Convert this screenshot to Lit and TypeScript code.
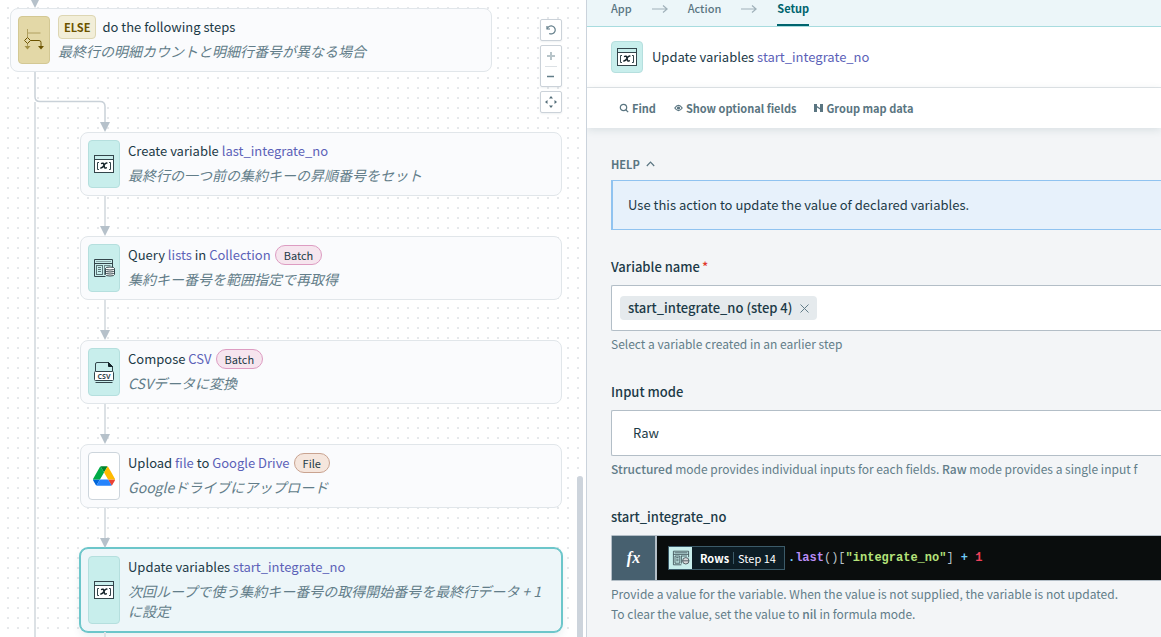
import { LitElement, html, svg, css, nothing, type TemplateResult } from "lit";
import { customElement, property } from "lit/decorators.js";

const variableIcon = html`<svg width="22" height="20" viewBox="0 0 22 20" aria-hidden="true">
  <rect x="1.5" y="1.5" width="19" height="17" fill="#fff" stroke="#33454b" />
  <rect x="2" y="2" width="18" height="3" fill="#c8eeec" />
  <path d="M1.500 5.500h19" stroke="#33454b" />
  <path d="M6 8.500H4.500v7H6M16 8.500h1.500v7H16" fill="none" stroke="#33454b" />
  <path d="M8.600 9.400q1.800-.7 2.200 1l.6 2.800q.4 1.300 1.900.7M13.800 9.100q-1.400-.3-2.700 2.100t-3.200 2.800" fill="none" stroke="#16242a" stroke-width="1.500" stroke-linecap="round" />
</svg>`;

const listIcon = html`<svg width="22" height="20" viewBox="0 0 22 20" fill="none" stroke="#33454b" aria-hidden="true">
  <path d="M19.500 9V1.500h-18v17h11" />
  <path d="M1.500 5.500h18" />
  <path d="M3 3.500h15" stroke="#8aa5a7" />
  <rect x="3.500" y="7.500" width="6" height="9" stroke="#5a7376" />
  <path d="M5 9.500h3M5 11.500h3M5 13.500h3" stroke="#5a7376" />
  <path d="M11.500 7.500h6M11.500 7v10" stroke="#6f8a8d" />
  <path d="M12.500 10.500v6q0 1.500 4.500 1.500t4.500-1.500v-6" fill="#fff" />
  <ellipse cx="17" cy="10.500" rx="4.500" ry="1.500" fill="#fff" />
  <path d="M12.500 12.500q0 1.500 4.500 1.500t4.500-1.500M12.500 14.500q0 1.500 4.500 1.500t4.500-1.500" />
</svg>`;

const csvIcon = html`<svg width="22" height="24" viewBox="0 0 22 24" aria-hidden="true">
  <path d="M2.500 11V4q0-1.500 1.500-1.500h11.500l4 4V11" fill="none" stroke="#33454b" />
  <path d="M15.500 2.500v4h4z" fill="#16242a" stroke="#16242a" />
  <rect x="1.500" y="11.500" width="19" height="9" rx="1" fill="#fff" stroke="#33454b" />
  <path d="M2.500 22.500h17" stroke="#33454b" />
  <text x="11" y="18.500" text-anchor="middle" font-family="Open Sans, sans-serif" font-size="7" font-weight="700" fill="#33454b">CSV</text>
</svg>`;

const driveIcon = html`<svg width="22" height="20" viewBox="0 0 87 78" aria-hidden="true">
  <path fill="#0066da" d="m6.600 66.850 3.850 6.650c.8 1.400 1.950 2.500 3.300 3.300l13.750-23.800h-27.500c0 1.550.4 3.100 1.200 4.500z" />
  <path fill="#00ac47" d="m43.650 25-13.750-23.800c-1.350.8-2.500 1.900-3.300 3.300l-25.400 44a9.060 9.060 0 0 0 -1.200 4.500h27.500z" />
  <path fill="#ea4335" d="m73.550 76.800c1.350-.8 2.500-1.900 3.300-3.300l1.600-2.750 7.650-13.250c.8-1.400 1.200-2.950 1.200-4.500h-27.502l5.852 11.500z" />
  <path fill="#00832d" d="m43.650 25 13.750-23.800c-1.350-.8-2.900-1.200-4.500-1.200h-18.500c-1.600 0-3.150.45-4.500 1.200z" />
  <path fill="#2684fc" d="m59.800 53h-32.300l-13.750 23.800c1.350.8 2.900 1.200 4.500 1.200h50.800c1.600 0 3.150-.45 4.500-1.200z" />
  <path fill="#ffba00" d="m73.400 26.500-12.700-22c-.8-1.400-1.950-2.500-3.300-3.300l-13.750 23.800 16.150 28h27.450c0-1.550-.4-3.100-1.200-4.500z" />
</svg>`;

const elseIcon = html`<svg width="22" height="22" viewBox="0 0 22 22" fill="none" aria-hidden="true">
  <path d="M4.500 0v8M4.500 14v4M5 4h12.500" stroke="#b0a061" />
  <path d="m1.500 17 3 3.500 3-3.500z" fill="#a39146" />
  <path d="m4.500 8.500 3 3-3 3-3-3z" stroke="#6b5300" />
  <path d="M7.500 11.500H16q2 0 2 2V18" stroke="#6b5300" />
  <path d="m15 17 3 3.500 3-3.500z" fill="#6b5300" />
</svg>`;

const icons: Record<string, TemplateResult> = {
  variable: variableIcon,
  list: listIcon,
  csv: csvIcon,
  drive: driveIcon,
  branch: elseIcon,
};

type Part = { text: string; accent?: boolean };

interface Step {
  icon: string;
  title: Part[];
  note: string;
  tag?: string;
  tagKind?: "batch" | "file";
  selected?: boolean;
}

const steps: Step[] = [
  {
    icon: "variable",
    title: [{ text: "Create variable " }, { text: "last_integrate_no", accent: true }],
    note: "最終行の一つ前の集約キーの昇順番号をセット",
  },
  {
    icon: "list",
    title: [{ text: "Query " }, { text: "lists", accent: true }, { text: " in " }, { text: "Collection", accent: true }],
    note: "集約キー番号を範囲指定で再取得",
    tag: "Batch",
    tagKind: "batch",
  },
  {
    icon: "csv",
    title: [{ text: "Compose " }, { text: "CSV", accent: true }],
    note: "CSVデータに変換",
    tag: "Batch",
    tagKind: "batch",
  },
  {
    icon: "drive",
    title: [{ text: "Upload " }, { text: "file", accent: true }, { text: " to " }, { text: "Google Drive", accent: true }],
    note: "Googleドライブにアップロード",
    tag: "File",
    tagKind: "file",
  },
  {
    icon: "variable",
    title: [{ text: "Update variables " }, { text: "start_integrate_no", accent: true }],
    note: "次回ループで使う集約キー番号の取得開始番号を最終行データ + 1 に設定",
    selected: true,
  },
];

@customElement("recipe-step")
class RecipeStep extends LitElement {
  @property({ attribute: false }) step!: Step;
  @property() keyword = "";

  static styles = css`
    :host { display: block; }
    .card {
      display: flex;
      gap: 8px;
      padding: 7px;
      border: 1px solid #e1e6ea;
      border-radius: 8px;
      background: #fafbfd;
    }
    .card.selected {
      border-color: #6cc6ca;
      background: #edf6f9;
      box-shadow: 0 0 0 1px #6cc6ca, 0 4px 8px rgba(30, 70, 90, 0.1);
    }
    .icon {
      flex: none;
      display: flex;
      align-items: center;
      justify-content: center;
      box-sizing: border-box;
      width: 32px;
      min-height: 48px;
      border: 1px solid #b5dfde;
      border-radius: 4px;
      background: #c8eeec;
    }
    .icon.drive { border-color: #cdd5dc; background: #fff; }
    .icon.branch { border-color: #d3c894; background: #e3d8a7; }
    .body { min-width: 0; }
    .title { display: flex; align-items: center; height: 22px; font-size: 13px; line-height: 22px; color: #1c3a47; white-space: pre; }
    .accent { color: #5c62b8; }
    .note { margin: 3px 0; line-height: 20px; font-style: italic; color: #627d89; }
    .tag {
      box-sizing: border-box;
      height: 20px;
      margin-left: 4px;
      padding: 0 8px;
      border: 1px solid;
      border-radius: 10px;
      font-size: 11px;
      line-height: 18px;
    }
    .batch { border-color: #dd9cc2; background: #f6e5ee; }
    .file { border-color: #c9a390; background: #f5e6dd; }
    .keyword {
      box-sizing: border-box;
      height: 24px;
      margin-right: 6px;
      padding: 0 5px;
      border: 1px solid #ddd6b3;
      border-radius: 4px;
      background: #f2eed8;
      color: #6b5300;
      font-size: 11px;
      font-weight: 700;
      line-height: 22px;
    }
  `;

  render() {
    const s = this.step;
    return html`<article class="card ${s.selected ? "selected" : ""}">
      <div class="icon ${s.icon}">${icons[s.icon]}</div>
      <div class="body">
        <div class="title">${this.keyword ? html`<span class="keyword">${this.keyword}</span>` : nothing}${s.title.map(
          (p) => html`<span class=${p.accent ? "accent" : ""}>${p.text}</span>`
        )}${s.tag ? html`<span class="tag ${s.tagKind}">${s.tag}</span>` : nothing}</div>
        <p class="note">${s.note}</p>
      </div>
    </article>`;
  }
}

@customElement("recipe-canvas")
class RecipeCanvas extends LitElement {
  static styles = css`
    :host {
      display: block;
      position: relative;
      overflow: hidden;
      background: #fff radial-gradient(circle at 8px 8px, #e6e8eb 1px, transparent 1px) 0 0 / 10px 10px;
    }
    .flow { padding: 0 24px 0 10px; }
    .connector { display: block; }
    .root { margin-right: 70px; }
    .branch { display: flex; }
    .trunk { flex: none; width: 2px; margin: 0 44px 0 24px; background: #dce1e5; }
    .steps { flex: 1; min-width: 0; }
    .controls { position: absolute; top: 19px; right: 24px; display: flex; flex-direction: column; gap: 4px; }
    .group {
      box-sizing: border-box;
      width: 22px;
      border: 1px solid #cbd2d9;
      border-radius: 2px;
      background: #fff;
      box-shadow: 0 1px 2px rgba(30, 60, 80, 0.08);
    }
    .control { display: flex; align-items: center; justify-content: center; width: 20px; height: 20px; padding: 0; border: 0; background: none; }
    .control:disabled { opacity: 0.45; }
    .rule { width: 12px; height: 0; margin: 0 auto -1px; border: 0; border-top: 1px solid #dce1e5; }
    .scrollbar { position: absolute; top: 476px; right: 3px; bottom: 0; width: 6px; border-radius: 3px 3px 0 0; background: #cdd4dc; }
  `;

  private link(height: number, x: number) {
    return html`<svg class="connector" width=${x + 10} height=${height} aria-hidden="true">
      <rect x=${x - 1} width="2" height=${height - 4} fill="#dce1e5" />
      <path transform="translate(${x} ${height})" d="M-5-10H5L0 0z" fill="#b6c1ca" />
    </svg>`;
  }

  render() {
    return html`
      <div class="flow">
        ${this.link(8, 25)}
        <recipe-step
          class="root"
          keyword="ELSE"
          .step=${{ icon: "branch", title: [{ text: "do the following steps" }], note: "最終行の明細カウントと明細行番号が異なる場合" }}
        ></recipe-step>
        <svg class="connector" width="110" height="60" aria-hidden="true">
          <path d="M25 0v25q0 4.500 5 4.500h60q5 0 5 5V50" fill="none" stroke="#c9d1d8" stroke-width="1.500" />
          <rect x="24" y="30" width="2" height="30" fill="#dce1e5" />
          <path d="M90 50h10l-5 10z" fill="#b6c1ca" />
        </svg>
        <div class="branch">
          <div class="trunk"></div>
          <div class="steps">
            ${steps.map((s, i) => html`${i ? this.link(40, 25) : nothing}<recipe-step .step=${s}></recipe-step>`)}
            ${this.link(40, 25)}
          </div>
        </div>
      </div>
      <div class="controls">
        <div class="group">
          <button class="control" aria-label="Undo">
            <svg width="10" height="10" viewBox="0 0 10 10" fill="none" stroke="#627d89" stroke-width="1.200">
              <path d="M1 1v3h3" />
              <path d="M1.400 3.600A4 4 0 1 1 3.200 8.400" />
            </svg>
          </button>
        </div>
        <div class="group">
          <button class="control" aria-label="Zoom in" disabled>
            <svg width="8" height="8"><path d="M4 0v8M0 4h8" stroke="#627d89" stroke-width="2" /></svg>
          </button>
          <hr class="rule" />
          <button class="control" aria-label="Zoom out">
            <svg width="8" height="8"><path d="M0 4.500h7" stroke="#627d89" stroke-width="1.500" /></svg>
          </button>
        </div>
        <div class="group">
          <button class="control" aria-label="Fit to screen">
            <svg width="12" height="12" viewBox="0 0 12 12" fill="#526c78">
              <path d="M6 0l2 2.500H4zM6 12l2-2.500H4zM0 6l2.500-2v4zM12 6 9.500 4v4z" />
            </svg>
          </button>
        </div>
      </div>
      <div class="scrollbar"></div>
    `;
  }
}

@customElement("setup-panel")
class SetupPanel extends LitElement {
  static styles = css`
    :host {
      display: block;
      box-sizing: border-box;
      overflow: hidden;
      border-left: 1px solid #cbd3dc;
      background: #f3f5f7;
      color: #1c3a47;
      font-size: 13px;
    }
    button, select { font: inherit; color: inherit; }
    button { padding: 0; border: 0; background: none; }
    .tabs { display: flex; align-items: center; gap: 20px; height: 26px; padding-left: 24px; border-bottom: 1px solid #a8dcdf; background: #ecf6f9; font-size: 11px; font-weight: 500; }
    .tab { height: 26px; padding-bottom: 8px; border-bottom: 2px solid transparent; box-sizing: border-box; line-height: 16px; color: #5a7581; text-decoration: none; }
    .tab.active { border-color: #00646e; color: #00646e; font-weight: 700; }
    .next { display: block; margin-bottom: 8px; }
    .header { display: flex; align-items: center; gap: 9px; padding: 14px 24px; border-bottom: 1px solid #e1e5e8; background: #fff; }
    .icon { display: flex; align-items: center; justify-content: center; box-sizing: border-box; width: 32px; height: 32px; border: 1px solid #b5dfde; border-radius: 4px; background: #c8eeec; }
    .heading { margin: 0; font-size: 13px; font-weight: 400; line-height: 20px; }
    .accent { color: #5c62b8; }
    .toolbar { position: relative; display: flex; gap: 18px; height: 40px; padding-left: 32px; background: #fff; box-shadow: 0 2px 8px rgba(30, 70, 80, 0.12); font-size: 11px; color: #5a7581; }
    .tool { display: flex; align-items: center; gap: 3px; font-weight: 700; }
    .content { padding: 26px 0 0 24px; }
    .help-toggle { display: flex; align-items: center; gap: 6px; font-size: 11px; font-weight: 700; line-height: 20px; color: #5a7581; }
    .help { margin: 6px 0 27px; padding: 14px 15px; border: solid #90c3f0; border-width: 1px 0 1px 2px; background: #e7f1fb; line-height: 20px; }
    .field { margin-bottom: 28px; }
    .label { display: block; margin-bottom: 8px; font-weight: 500; line-height: 20px; }
    .required { margin-left: 2px; color: #e0392b; }
    .box { display: flex; align-items: center; box-sizing: border-box; width: 100%; height: 46px; border: solid #b3bec7; border-width: 1px 0 1px 1px; border-radius: 2px 0 0 2px; background: #fff; }
    .tokens { padding: 0 8px; }
    .token { display: flex; align-items: center; gap: 8px; height: 24px; padding: 0 8px; border-radius: 4px; background: #e5eaed; font-weight: 500; line-height: 24px; }
    .remove { display: flex; }
    .select { appearance: none; padding: 0 21px; }
    .hint { margin: 3px 0 0; font-size: 12px; line-height: 20px; color: #627d89; white-space: nowrap; }
    .strong { font-weight: 500; }
    .editor { background: #0a0d0d; }
    .fx { align-self: stretch; width: 45px; border-right: 2px solid #b3bec7; background: #47606f; color: #fff; font: italic 700 16px "Liberation Serif", serif; }
    .pill { display: flex; align-items: center; height: 22px; margin-left: 11px; border: 1px solid #3c5b69; background: #0d1d25; color: #fff; font-size: 11px; }
    .pill-icon { display: flex; align-items: center; justify-content: center; width: 23px; height: 22px; background: #c8eeec; }
    .pill-name { padding: 0 4px 0 8px; font-weight: 700; }
    .pill-step { padding: 0 8px 0 4px; border-left: 1px solid #3c5b69; line-height: 12px; }
    .code { margin-left: 3px; font: 700 12px/16px "Liberation Mono", monospace; color: #b9c3c9; white-space: pre; }
    .op { color: #6fcbf5; }
    .fn { color: #b98cf5; }
    .str { color: #b5e27a; }
    .num { color: #f0405a; }
    .plain { font-weight: 400; }
  `;

  render() {
    const arrow = html`<svg class="next" width="16" height="8" viewBox="0 0 16 8" fill="none" stroke="#9fb0b9" stroke-width="1.200" aria-hidden="true"><path d="M0 4h15M11 .5 15.200 4 11 7.500" /></svg>`;
    return html`
      <nav class="tabs">
        <a class="tab" href="#app">App</a>${arrow}<a class="tab" href="#action">Action</a>${arrow}<a class="tab active" href="#setup">Setup</a>
      </nav>
      <header class="header">
        <div class="icon">${variableIcon}</div>
        <h1 class="heading">Update variables <span class="accent">start_integrate_no</span></h1>
      </header>
      <div class="toolbar">
        <button class="tool">
          <svg width="10" height="10" viewBox="0 0 10 10" fill="none" stroke="#5a7581" stroke-width="1.200"><circle cx="4.500" cy="4.500" r="3.200" /><path d="m7 7 2.200 2.200" /></svg>
          Find
        </button>
        <button class="tool">
          <svg width="9" height="8" viewBox="0 0 9 8" fill="none" stroke="#5a7581" stroke-width="1.200"><path d="M.8 4Q4.500-1.200 8.200 4 4.500 9.200.8 4z" /><circle cx="4.500" cy="4" r="1" fill="#5a7581" /></svg>
          Show optional fields
        </button>
        <button class="tool">
          <svg width="9" height="8" viewBox="0 0 9 8" fill="#5a7581"><path d="M0 0h3v8H0zM6 0h3v8H6z" /><path d="m3 2 3 2v1.500L3 3.500z" /></svg>
          Group map data
        </button>
      </div>
      <div class="content">
        <button class="help-toggle" aria-expanded="true">
          HELP
          <svg width="9" height="6" viewBox="0 0 9 6" fill="none" stroke="#5a7581" stroke-width="1.200"><path d="m.8 5 3.700-3.800L8.200 5" /></svg>
        </button>
        <div class="help">Use this action to update the value of declared variables.</div>

        <div class="field" role="group" aria-labelledby="variable-label">
          <span class="label" id="variable-label">Variable name<span class="required">*</span></span>
          <div class="box tokens">
            <span class="token">start_integrate_no (step 4)
              <button class="remove" aria-label="Remove">
                <svg width="9" height="9" viewBox="0 0 9 9" stroke="#627d89"><path d="m.5.5 8 8M8.500.5l-8 8" /></svg>
              </button>
            </span>
          </div>
          <p class="hint">Select a variable created in an earlier step</p>
        </div>

        <div class="field">
          <label class="label" for="mode">Input mode</label>
          <select class="box select" id="mode"><option>Raw</option></select>
          <p class="hint"><b class="strong">Structured</b> mode provides individual inputs for each fields. <b class="strong">Raw</b> mode provides a single input f</p>
        </div>

        <div class="field" role="group" aria-labelledby="value-label">
          <span class="label" id="value-label">start_integrate_no</span>
          <div class="box editor">
            <button class="fx" aria-label="Formula mode">fx</button>
            <span class="pill">
              <span class="pill-icon"><svg width="18" height="16" viewBox="0 0 22 20" fill="none" stroke="#33454b" aria-hidden="true">${svg`
                <path d="M20.500 9V1.500h-19v17h10M1.500 5.500h19M3 3.500h16" />
                <path d="M3.500 7.500h6v9h-6zM5 9.500h3M5 11.500h3M5 13.500h3M11.500 7.500h7M11.500 7v10" />
                <circle cx="17" cy="13.500" r="4" fill="#d8d8da" /><path d="M13 13.500h8" />`}</svg></span>
              <span class="pill-name">Rows</span><span class="pill-step">Step 14</span>
            </span>
            <code class="code"><span class="op">.</span><span class="fn">last</span><span class="plain">()[</span><span class="str">"integrate_no"</span><span class="plain">]</span> <span class="op">+</span> <span class="num">1</span></code>
          </div>
          <p class="hint">Provide a value for the variable. When the value is not supplied, the variable is not updated.<br />To clear the value, set the value to <b class="strong">nil</b> in formula mode.</p>
        </div>
      </div>
    `;
  }
}

@customElement("app-root")
class AppRoot extends LitElement {
  static styles = css`
    :host {
      display: grid;
      grid-template-columns: minmax(0, 586fr) minmax(0, 575fr);
      height: 100vh;
      overflow: hidden;
      font-family: "Noto Sans CJK JP", sans-serif;
      font-size: 14px;
      line-height: 20px;
    }
  `;

  render() {
    return html`<recipe-canvas></recipe-canvas><setup-panel></setup-panel>`;
  }
}
